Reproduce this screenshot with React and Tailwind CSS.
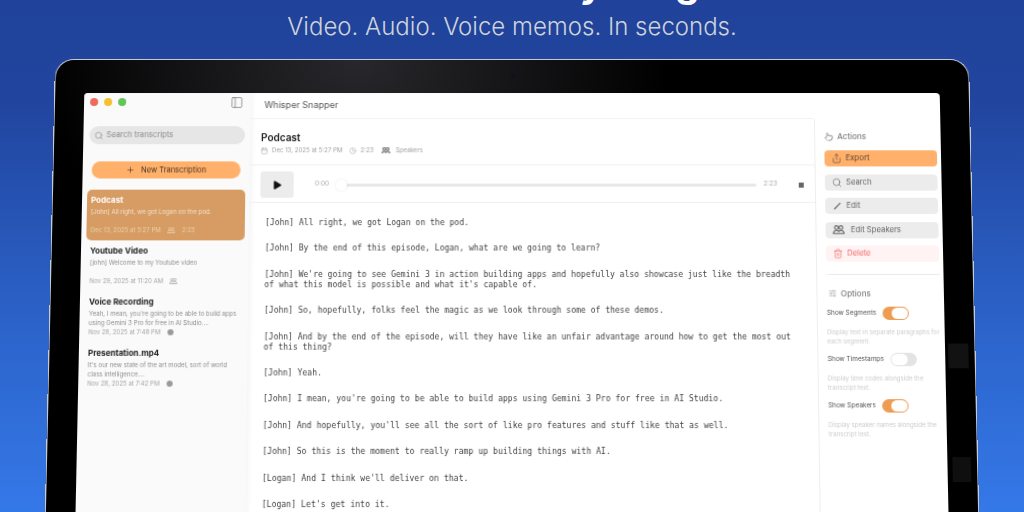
import React from 'react';
import {
  Calendar, Clock, PanelLeft, Play, Plus, Pointer, Search, Share, SlidersHorizontal, Trash2,
} from 'lucide-react';

const recordings = [
  { title: 'Podcast', text: '[John] All right, we got Logan on the pod.', date: 'Dec 13, 2025 at 5:27 PM', speakers: true, time: '2:23', active: true },
  { title: 'Youtube Video', text: '[john] Welcome to my Youtube video', date: 'Nov 29, 2025 at 11:20 AM', speakers: true },
  { title: 'Voice Recording', text: "Yeah, I mean, you're going to be able to build apps using Gemini 3 Pro for free in AI Studio....", date: 'Nov 28, 2025 at 7:48 PM', dot: true },
  { title: 'Presentation.mp4', text: "It's our new state of the art model, sort of world class intelligence....", date: 'Nov 28, 2025 at 7:42 PM', dot: true },
];

const transcript = [
  '[John] All right, we got Logan on the pod.',
  '[John] By the end of this episode, Logan, what are we going to learn?',
  "[John] We're going to see Gemini 3 in action building apps and hopefully also showcase just like the breadth of what this model is possible and what it's capable of.",
  '[John] So, hopefully, folks feel the magic as we look through some of these demos.',
  '[John] And by the end of the episode, will they have like an unfair advantage around how to get the most out of this thing?',
  '[John] Yeah.',
  "[John] I mean, you're going to be able to build apps using Gemini 3 Pro for free in AI Studio.",
  "[John] And hopefully, you'll see all the sort of like pro features and stuff like that as well.",
  '[John] So this is the moment to really ramp up building things with AI.',
  "[Logan] And I think we'll deliver on that.",
  "[Logan] Let's get into it.",
];

const options = [
  { label: 'Show Segments', on: true, text: 'Display text in separate paragraphs for each segment.' },
  { label: 'Show Timestamps', on: false, text: 'Display time codes alongside the transcript text.' },
  { label: 'Show Speakers', on: true, text: 'Display speaker names alongside the transcript text.' },
];

// two heads side by side, same size
const TwoPeople = ({ size = 8, strokeWidth = 1.6, className = '' }) => (
  <svg width={size} height={size * 0.75} viewBox="0 0 16 12" fill="none" stroke="currentColor" strokeWidth={strokeWidth} className={className}>
    <circle cx="5" cy="3.2" r="2.4" />
    <circle cx="11" cy="3.2" r="2.4" />
    <path d="M1 11 C1 8 3 7 5 7 C6.6 7 7.6 7.6 8 8.4 C8.4 7.6 9.4 7 11 7 C13 7 15 8 15 11 Z" />
  </svg>
);

const EditSlash = ({ size = 10 }) => (
  <svg width={size} height={size} viewBox="0 0 10 10" fill="none" stroke="currentColor" strokeWidth="1.1" strokeLinecap="round">
    <path d="M2.2 8 L7.8 2.4" />
  </svg>
);

const RecordingItem = ({ item }) => (
  <div className={`h-[50px] shrink-0 pl-[4px] pr-[6px] pt-[5px] ${item.active ? 'rounded-[5px] bg-[#d69c63] text-white' : ''}`}>
    <div className={`text-[8px] font-bold leading-[10px] ${item.active ? 'text-white' : 'text-[#222222]'}`}>{item.title}</div>
    <div className={`mt-[2px] h-[18px] text-[6.1px] leading-[9px] ${item.active ? 'text-[#f3dfc8]' : 'text-[#8f8f8f]'}`}>{item.text}</div>
    <div className={`flex h-[9px] items-center gap-[5px] text-[6.05px] leading-[9px] ${item.active ? 'text-[#ecd0ae]' : 'text-[#a6a6a6]'}`}>
      <span>{item.date}</span>
      {item.speakers && <TwoPeople size={8} className="ml-px" />}
      {item.time && <span className="ml-[2px]">{item.time}</span>}
      {item.dot && <span className="ml-[2px] h-[6px] w-[6px] rounded-full bg-[#9a9a9a]" />}
    </div>
  </div>
);

const ActionButton = ({ icon: Icon, label, className = 'bg-[#ececec] text-[#666666]', gap = 'gap-[4px]', iconSize = 10 }) => (
  <div className={`flex h-[16px] items-center rounded-[4px] pl-[7px] text-[7.7px] ${gap} ${className}`}>
    <Icon size={iconSize} strokeWidth={1.5} />
    <span>{label}</span>
  </div>
);

const OptionRow = ({ option }) => (
  <div className="h-[45px]">
    <div className="flex h-[13px] items-center gap-[6px] text-[6.4px] text-[#555555]">
      <span>{option.label}</span>
      <span className={`flex h-[13px] w-[26px] items-center rounded-full p-px ${option.on ? 'justify-end bg-[#ee9c52]' : 'justify-start bg-[#e3e3e3]'}`}>
        <span className="h-[11px] w-[16px] rounded-full bg-white" />
      </span>
    </div>
    <p className="mt-[7px] w-[114px] text-[6.05px] leading-[9px] text-[#cdcdcd]">{option.text}</p>
  </div>
);

export default function App() {
  return (
    <div className="h-[512px] w-[1024px] overflow-hidden bg-[linear-gradient(180deg,#20429a_0%,#21459f_20%,#2c64cb_65%,#3578e8_100%)] font-['Inter',sans-serif] blur-[0.45px]">
      {/* Headline sits mostly above the crop */}
      <div className="-mt-[40px] flex h-[46px] items-end justify-center gap-[10px] text-[38px] font-bold leading-[46px]">
        <span className="text-[#1d3fae]">Transcribe</span>
        <span className="text-white">anything</span>
      </div>
      <div className="mt-[5px] text-center text-[24px] font-light leading-[32px] text-[#cfd3da]">
        Video. Audio. Voice memos. In seconds.
      </div>

      <div className="mt-[16px] perspective-[1000px] perspective-origin-top">
        <div className="relative mx-auto h-[470px] w-[914px] origin-top rotate-x-[2.8deg] rounded-t-[19px] border-[1.5px] border-b-0 border-[#c6cad2] bg-[radial-gradient(ellipse_at_33%_0%,#28282c_0%,#131315_20%,#000000_36%)] pl-[29px] pt-[33px]">
          <span className="absolute left-[455px] top-[14px] h-[4px] w-[4px] rounded-full bg-[#0d1222]" />
          {/* wallpaper showing past the window */}
          <span className="absolute right-[6px] top-[280px] h-[24px] w-[20px] bg-[#121212]" />
          <span className="absolute right-[6px] top-[390px] h-[24px] w-[18px] bg-[#0f0f0f]" />
          <div className="relative flex h-[440px] w-[854px] overflow-hidden rounded-t-[4px] bg-white text-[#333333]">
            {/* Sidebar */}
            <aside className="flex w-[166px] shrink-0 flex-col bg-[#fafafa] shadow-[2px_0_6px_rgba(0,0,0,0.05)]">
              <div className="flex h-[18px] items-center justify-between pl-[6px] pr-[7px]">
                <div className="flex gap-[6px]">
                  <span className="h-[8px] w-[8px] rounded-full bg-[#ee6a5f]" />
                  <span className="h-[8px] w-[8px] rounded-full bg-[#f5c130]" />
                  <span className="h-[8px] w-[8px] rounded-full bg-[#62c554]" />
                </div>
                <PanelLeft size={13} strokeWidth={1.2} className="text-[#666666]" />
              </div>
              <div className="ml-[6px] mr-[5px] mt-[15px] flex h-[18px] items-center gap-[3px] rounded-full bg-[#e6e6e6] pl-[5px] text-[7.7px] text-[#8a8a8a]">
                <Search size={9} strokeWidth={1.6} />
                <span>Search transcripts</span>
              </div>
              <div className="mx-[9px] mt-[17px] flex h-[17px] items-center justify-center gap-[6px] rounded-full bg-[#ffb06b] text-[7.5px] text-[#4a3524]">
                <Plus size={9} strokeWidth={1.6} />
                <span>New Transcription</span>
              </div>
              <div className="ml-[5px] mr-[4px] mt-[11px] flex flex-col">
                {recordings.map((item) => (
                  <RecordingItem key={item.title} item={item} />
                ))}
              </div>
            </aside>

            {/* Main column */}
            <main className="flex w-[562px] shrink-0 flex-col">
              <div className="flex h-[26px] shrink-0 items-center border-b border-[#f3f3f3] pb-[2px] pl-[14px] text-[9px] text-[#555555]">
                Whisper Snapper
              </div>
              <div className="h-[46px] shrink-0 border-b border-[#f0f0f0] pl-[11px] pt-[11px]">
                <div className="text-[10px] font-semibold leading-[14px] text-[#222222]">Podcast</div>
                <div className="mt-[2px] flex items-center text-[6.1px] leading-[8px] text-[#a3a3a3]">
                  <Calendar size={7} strokeWidth={1.4} className="mr-[4px] text-[#888888]" />
                  <span>Dec 13, 2025 at 5:27 PM</span>
                  <Clock size={7} strokeWidth={1.4} className="ml-[7px] mr-[4px] text-[#888888]" />
                  <span>2:23</span>
                  <TwoPeople size={9} strokeWidth={2} className="ml-[8px] mr-[5px] text-[#777777]" />
                  <span>Speakers</span>
                </div>
              </div>
              <div className="flex h-[37px] shrink-0 items-center border-b border-[#f0f0f0] pl-[11px] pt-[2px] text-[6.5px] text-[#aaaaaa]">
                <div className="flex h-[26px] w-[33px] shrink-0 items-center justify-center rounded-[3px] bg-[#ececec] text-[#111111]">
                  <Play size={11} fill="currentColor" strokeWidth={0} />
                </div>
                <span className="ml-[21px] w-[14px]">0:00</span>
                <div className="relative ml-[7px] h-[3px] w-[418px] rounded-full bg-[#e8e8e8]">
                  <span className="absolute -top-[4px] left-0 h-[11px] w-[11px] rounded-full bg-white shadow-[0_0_3px_rgba(0,0,0,0.1)]" />
                </div>
                <span className="ml-[7px] w-[14px]">2:23</span>
                <span className="ml-[21px] h-[5px] w-[5px] bg-[#666666]" />
              </div>
              <div className="flex flex-col gap-[15.4px] pl-[16px] pr-[13px] pt-[15px] font-['DejaVu_Sans_Mono',monospace] text-[8px] leading-[10px] text-[#444444]">
                {transcript.map((line) => (
                  <p key={line}>{line}</p>
                ))}
              </div>
            </main>

            {/* Actions panel */}
            <aside className="mt-[26px] w-[126px] shrink-0 border-l border-[#eeeeee] pl-[9px] pr-[4px] pt-[11px]">
              <div className="flex h-[12px] items-center gap-[4px] text-[8px] font-medium text-[#808080]">
                <Pointer size={9} strokeWidth={1.5} />
                <span>Actions</span>
              </div>
              <div className="mt-[8px] flex flex-col gap-[7.5px]">
                <ActionButton icon={Share} label="Export" className="bg-[#ffb06b] text-[#5b4432]" />
                <ActionButton icon={Search} label="Search" />
                <ActionButton icon={EditSlash} label="Edit" />
                <ActionButton icon={TwoPeople} label="Edit Speakers" gap="gap-[6px]" iconSize={12} />
                <ActionButton icon={Trash2} label="Delete" className="bg-[#fff3f3] text-[#f26b6b]" />
              </div>
              <div className="ml-px mt-[12px] h-px bg-[#ebebeb]" />
              <div className="mt-[12px] flex h-[12px] items-center gap-[4px] pl-[2px] text-[8px] font-medium text-[#808080]">
                <SlidersHorizontal size={8} strokeWidth={1.5} />
                <span>Options</span>
              </div>
              <div className="mt-[7px]">
                {options.map((option) => (
                  <OptionRow key={option.label} option={option} />
                ))}
              </div>
            </aside>
          </div>
        </div>
      </div>
    </div>
  );
}
